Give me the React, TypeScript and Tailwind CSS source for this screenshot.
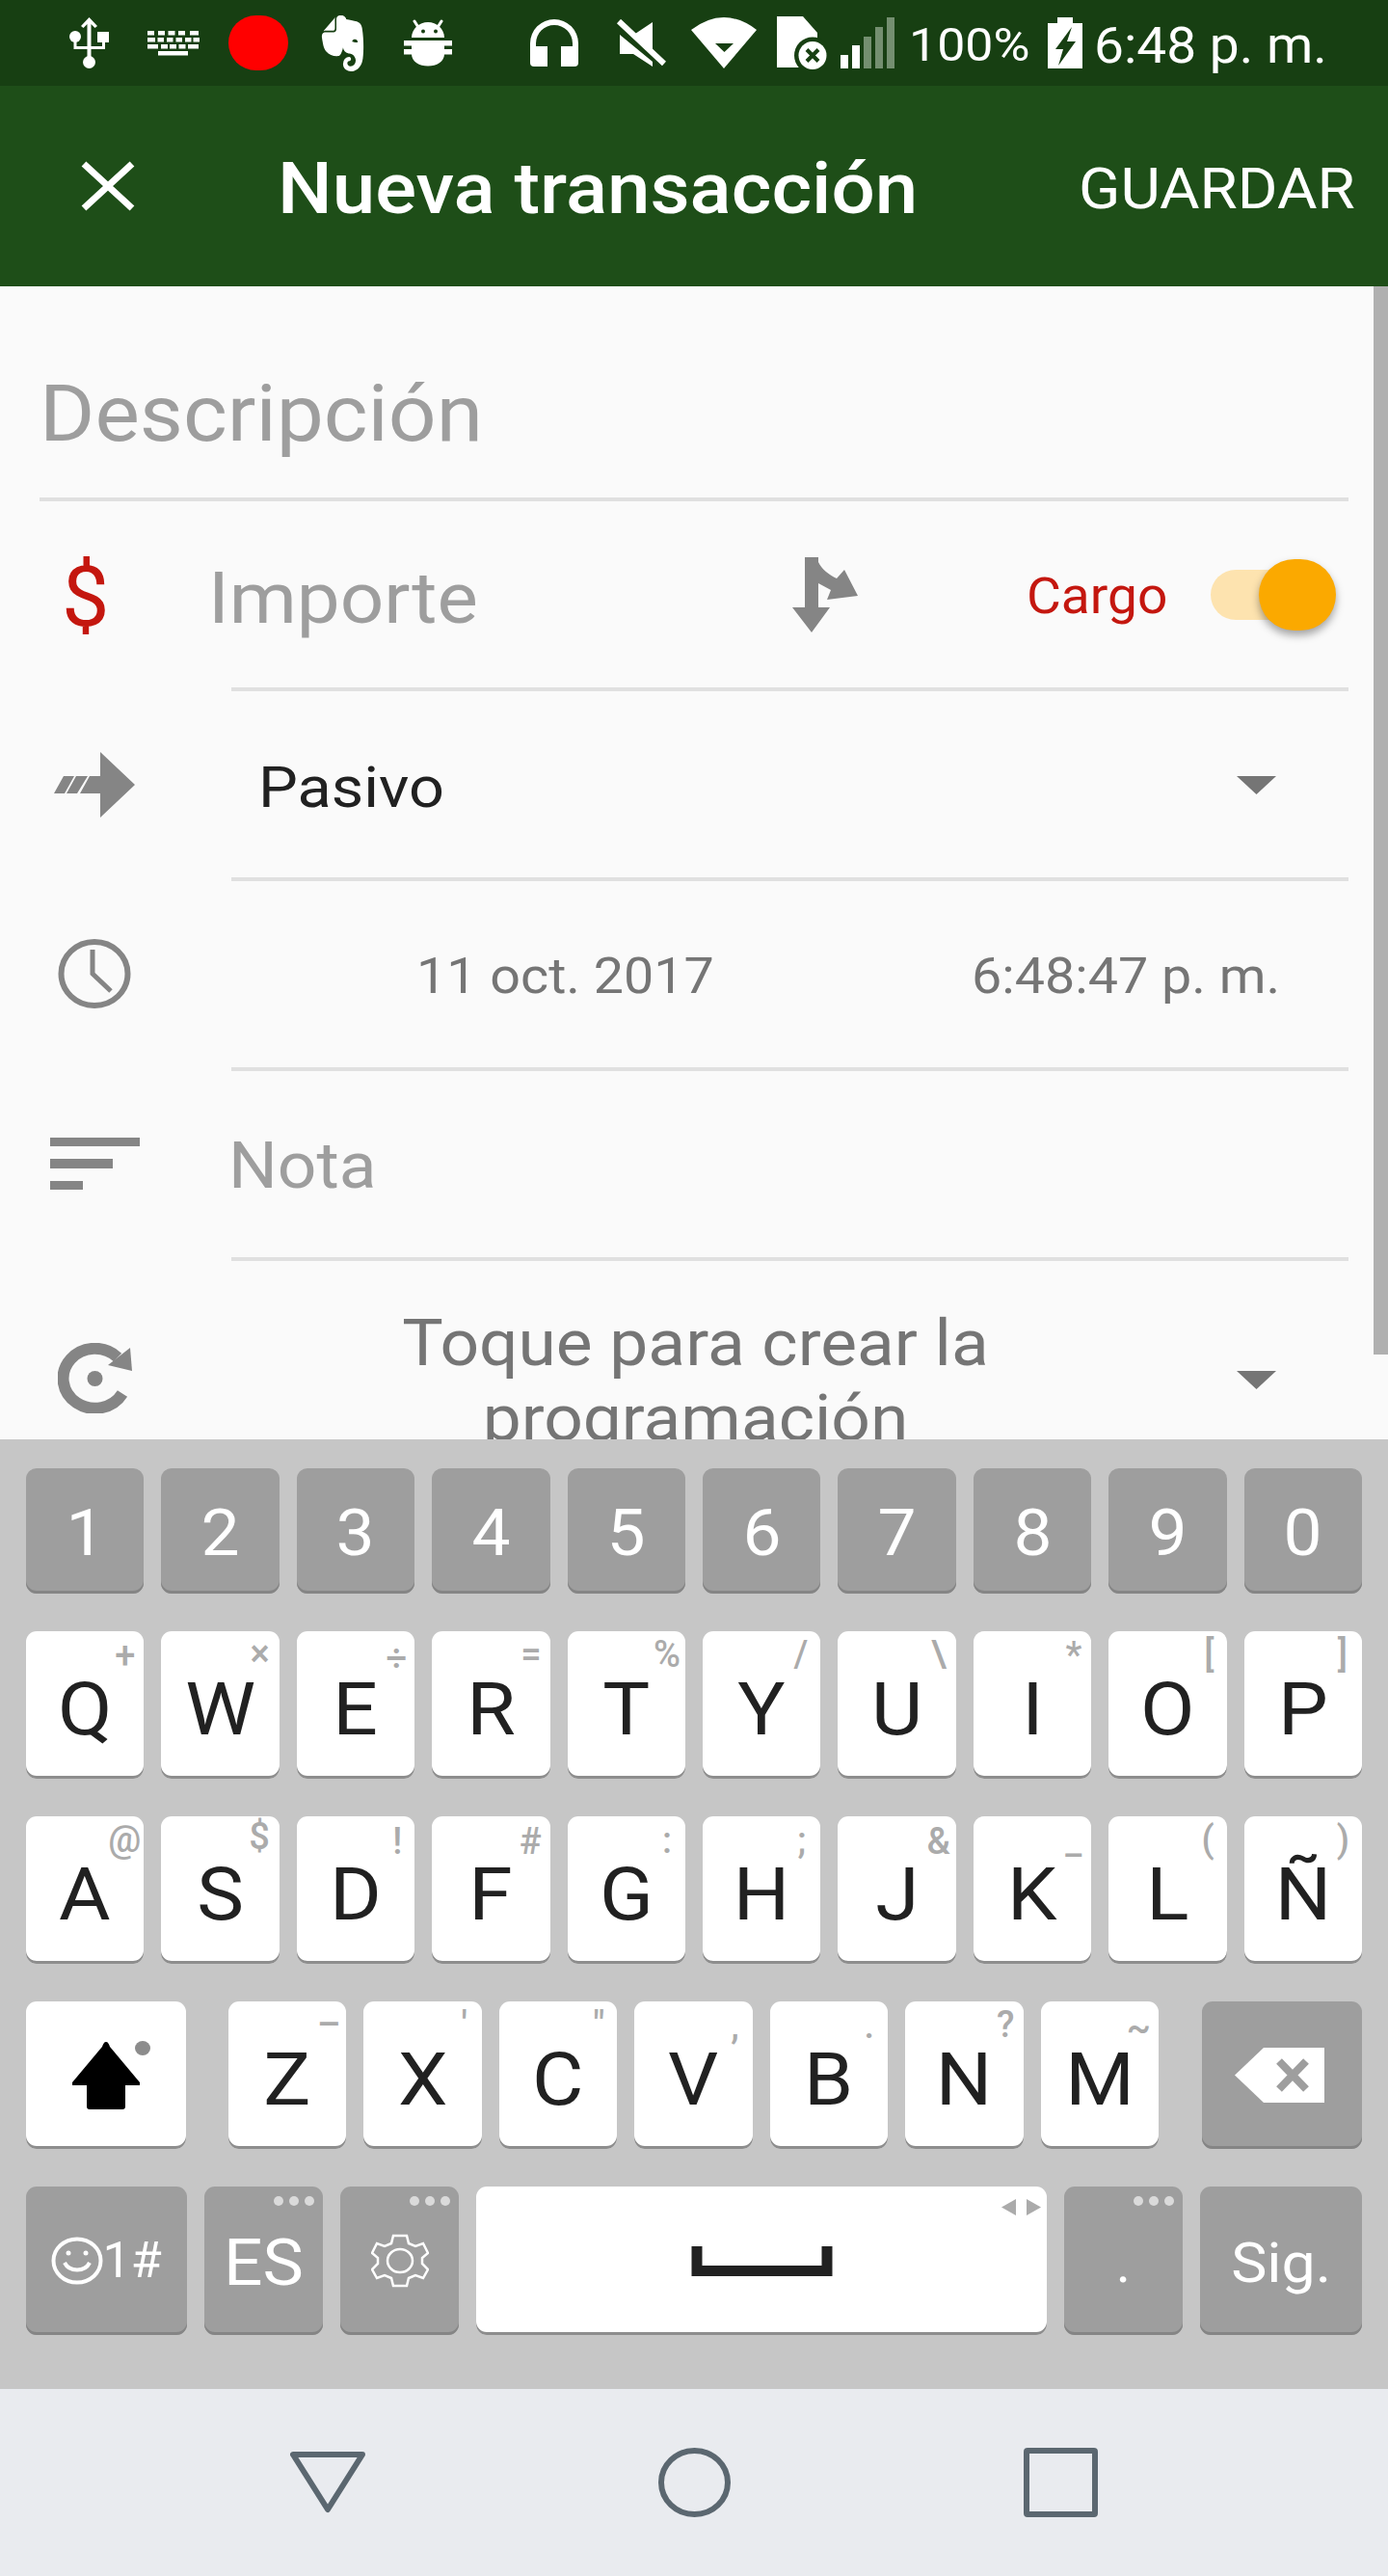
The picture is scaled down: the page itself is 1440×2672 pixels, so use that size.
import type { ReactNode } from "react";
import { SiEvernote } from "react-icons/si";

const numberKeys = ["1", "2", "3", "4", "5", "6", "7", "8", "9", "0"];

const qwertyKeys = [
  ["Q", "+", "right-[9px] top-[6px]"],
  ["W", "×", "right-[10px] top-[4px]"],
  ["E", "÷", "right-[8px] top-[9px]"],
  ["R", "=", "right-[9px] top-[5px]"],
  ["T", "%", "right-[5px] top-[5px]"],
  ["Y", "/", "right-[13px] top-[5px]"],
  ["U", "\\", "right-[10px] top-[5px]"],
  ["I", "*", "right-[10px] top-[6px]"],
  ["O", "[", "right-[13px] top-[5px]"],
  ["P", "]", "right-[15px] top-[5px]"],
];

const asdfKeys = [
  ["A", "@", "right-[3px] top-[5px]"],
  ["S", "$", "right-[10px] top-[2px]"],
  ["D", "!", "right-[13px] top-[7px]"],
  ["F", "#", "right-[9px] top-[7px]"],
  ["G", ":", "right-[14px] top-[6px]"],
  ["H", ";", "right-[15px] top-[6px]"],
  ["J", "&", "right-[6px] top-[7px]"],
  ["K", "_", "right-[10px] top-[6px]"],
  ["L", "(", "right-[13px] top-[5px]"],
  ["Ñ", ")", "right-[13px] top-[5px]"],
];

const zxcvKeys = [
  ["Z", "–", "right-[6px] top-[5px]"],
  ["X", "'", "right-[15px] top-[5px]"],
  ["C", '"', "right-[13px] top-[5px]"],
  ["V", ",", "right-[14px] top-[6px]"],
  ["B", ".", "right-[14px] top-[6px]"],
  ["N", "?", "right-[9px] top-[5px]"],
  ["M", "~", "right-[8px] top-[8px]"],
];

function Key({ dark, className, children }: { dark?: boolean; className?: string; children?: ReactNode }) {
  return (
    <div
      className={`relative flex items-center justify-center rounded-[11px] ${
        dark
          ? "bg-[#9E9E9E] text-white shadow-[inset_0_-3px_0_#858585]"
          : "bg-white text-[#212121] shadow-[inset_0_-3px_0_#8d8d8d]"
      } ${className ?? "flex-1"}`}
    >
      {children}
    </div>
  );
}

function LetterKey({ letter, sub, subPos }: { letter: string; sub: string; subPos: string }) {
  return (
    <Key>
      <span className="pt-[8px] text-[76px] leading-none scale-x-[1.08]">{letter}</span>
      <span className={`absolute text-[38px] font-medium leading-none text-[#ABABAB] ${subPos}`}>{sub}</span>
    </Key>
  );
}

function Dots() {
  return (
    <div className="absolute right-[9px] top-[10px] flex gap-[6px]">
      <span className="size-[10px] rounded-full bg-[#DADADA]" />
      <span className="size-[10px] rounded-full bg-[#DADADA]" />
      <span className="size-[10px] rounded-full bg-[#DADADA]" />
    </div>
  );
}

function Caret() {
  return (
    <svg viewBox="0 0 41 19" className="h-[19px] w-[41px] shrink-0">
      <polygon points="0,0 41,0 20.5,19" fill="#757575" />
    </svg>
  );
}

function StatusBar() {
  return (
    <div className="flex h-[89px] shrink-0 items-center bg-[#173F12] pl-[72px] text-white">
      {/* usb */}
      <svg viewBox="0 0 41 53" className="h-[53px] w-[41px]" fill="#fff">
        <path d="M20.5 0 L29 9 L26.5 11 L22.5 7 V47 H18.5 V7 L14.5 11 L12 9Z" />
        <circle cx="6" cy="20" r="6" />
        <rect x="29" y="15" width="12" height="11" />
        <path d="M4.5 20 H7.5 V30 H34 V25 H37 V33 H4.5Z" />
        <circle cx="20.5" cy="46.5" r="6.5" />
      </svg>
      {/* keyboard */}
      <svg viewBox="0 0 54 26" className="ml-[40px] h-[26px] w-[54px]" fill="#fff">
        {[0, 11, 21.5, 32, 44].map((x) => (
          <rect key={x} x={x} y="0" width={x === 44 ? 9 : 7} height="4.5" />
        ))}
        {[0, 10.5, 20, 29.5, 39, 47.5].map((x) => (
          <rect key={x} x={x} y="7" width={x === 0 ? 8 : 6.5} height="4.5" />
        ))}
        {[0, 14, 23, 32.5, 42].map((x) => (
          <rect key={x} x={x} y="14" width={x === 0 || x === 42 ? 11 : 7} height="4.5" />
        ))}
        <rect x="11" y="21" width="31" height="4.5" />
      </svg>
      <div className="ml-[30px] h-[57px] w-[62px] rounded-full bg-[#FF0000]" />
      <SiEvernote className="ml-[31px] h-[58px] w-[51px]" preserveAspectRatio="none" />
      {/* debug */}
      <svg viewBox="0 0 50 50" className="ml-[38px] h-[50px] w-[50px]" fill="#fff">
        <path d="M11 2 L16 10 M39 2 L34 10" stroke="#fff" strokeWidth="3" strokeLinecap="round" />
        <path d="M8 19 A17 16 0 0 1 42 19Z" />
        <circle cx="20" cy="12.5" r="2" fill="#173F12" />
        <circle cx="33" cy="12.5" r="2" fill="#173F12" />
        <rect x="0" y="22" width="50" height="5.5" />
        <rect x="8" y="27" width="34" height="5" />
        <rect x="0" y="31" width="50" height="5.5" />
        <path d="M8 36 H42 C42 44 34 48.5 25 48.5 C16 48.5 8 44 8 36Z" />
      </svg>
      {/* headset */}
      <svg viewBox="0 0 50 49" className="ml-[81px] h-[49px] w-[50px]" fill="#fff">
        <path d="M0 30 V25 A25 25 0 0 1 50 25 V30 H44 V25 A19 19 0 0 0 6 25 V30Z" />
        <path d="M0 28 H18 V49 H4 Q0 49 0 45Z" />
        <path d="M50 28 H32 V49 H46 Q50 49 50 45Z" />
      </svg>
      {/* muted */}
      <svg viewBox="0 0 52 50" className="ml-[39px] h-[50px] w-[52px]" fill="#fff">
        <path d="M20 15 L38 3 V32Z" />
        <path d="M4 16 L38 44 V49 L18 36 H4Z" />
        <path d="M3 2 L50 46" stroke="#fff" strokeWidth="6" />
      </svg>
      {/* wifi */}
      <svg viewBox="0 0 68 53" className="ml-[26px] h-[53px] w-[68px]" fill="#fff">
        <path d="M0 13 Q34 -13 68 13 L34 53Z" />
        <polygon points="25,27 44,27 34.5,36" fill="#173F12" />
      </svg>
      {/* sim */}
      <svg viewBox="0 0 52 55" className="ml-[21px] h-[55px] w-[52px]" fill="#fff">
        <path d="M0 0 H27 L42 17 V53 H0Z" />
        <circle cx="37" cy="40.5" r="19" fill="#173F12" />
        <circle cx="37" cy="40.5" r="14.5" />
        <path d="M31 34.5 L43 46.5 M43 34.5 L31 46.5" stroke="#173F12" strokeWidth="4" />
      </svg>
      {/* signal */}
      <svg viewBox="0 0 56 53" className="ml-[14px] h-[53px] w-[56px]">
        <rect x="0" y="39" width="8" height="14" fill="#fff" />
        <rect x="12" y="29" width="8" height="24" fill="#fff" />
        <rect x="24" y="20" width="8" height="33" fill="#748F70" />
        <rect x="36" y="10" width="8" height="43" fill="#748F70" />
        <rect x="48" y="0" width="8" height="53" fill="#748F70" />
      </svg>
      <span className="ml-[15px] w-[122px] origin-left scale-x-[1.08] whitespace-nowrap pt-[5px] text-[48px] leading-none">100%</span>
      {/* battery */}
      <svg viewBox="0 0 36 53" className="ml-[22px] h-[53px] w-[36px]" fill="#fff">
        <path d="M10 0 H26 V6 H36 V53 H0 V6 H10Z" />
        <polygon points="25,10 8,33 16,33 11,50 29,25 20,25" fill="#173F12" />
      </svg>
      <span className="ml-[12px] w-[238px] origin-left scale-x-[1.08] whitespace-nowrap pt-[5px] text-[51px] leading-none">6:48 p. m.</span>
    </div>
  );
}

function AppBar() {
  return (
    <div className="flex h-[208px] shrink-0 items-center bg-[#1E4E18] pl-[84px] text-white">
      <svg viewBox="0 0 56 52" className="h-[52px] w-[56px]">
        <path d="M3 3 L53 49 M53 3 L3 49" stroke="#fff" strokeWidth="7" />
      </svg>
      <span className="ml-[148px] w-[661px] origin-left scale-x-[1.08] whitespace-nowrap pt-[5px] text-[74px] font-medium leading-none">
        Nueva transacción
      </span>
      <span className="ml-[170px] w-[284px] origin-left scale-x-[1.08] whitespace-nowrap pt-[5px] text-[59px] leading-none">
        GUARDAR
      </span>
    </div>
  );
}

function FormRow({ icon, children, className }: { icon: ReactNode; children: ReactNode; className?: string }) {
  return (
    <div className="flex h-[197px] shrink-0 items-stretch pr-[41px]">
      <div className="flex w-[240px] shrink-0 items-center">{icon}</div>
      <div className={`flex flex-1 items-center border-b-[4px] border-[#E0E0E0] ${className ?? ""}`}>{children}</div>
    </div>
  );
}

function TransactionForm() {
  return (
    <div className="relative h-[1196px] shrink-0 overflow-hidden bg-[#FAFAFA]">
      <div className="absolute right-0 top-0 h-[1108px] w-[15px] bg-[#B0B0B0]" />

      <div className="mx-[41px] flex h-[223px] items-center border-b-[4px] border-[#E0E0E0] pt-[46px]">
        <span className="origin-left scale-x-[1.08] text-[81px] leading-none text-[#9E9E9E]">Descripción</span>
      </div>

      <FormRow icon={<span className="ml-[64px] text-[88px] leading-none text-[#C4170F]">$</span>}>
        <span className="-ml-[24px] w-[606px] origin-left scale-x-[1.08] pt-[8px] text-[74px] leading-none text-[#9E9E9E]">Importe</span>
        <svg viewBox="0 0 68 78" className="h-[78px] w-[68px]" fill="#858585">
          <path d="M13 0 H27 V5 C30 12 38 18 46 22 L54 13 L68 40 L36 44 L40 34 L27 27 V52 H39 L20 78 L0 52 H13Z" />
        </svg>
        <span className="ml-[175px] w-[145px] origin-left scale-x-[1.08] pt-[3px] text-[51px] leading-none text-[#C4170F]">Cargo</span>
        <div className="relative ml-[46px] flex h-[74px] w-[130px] items-center">
          <div className="h-[52px] w-[100px] rounded-full bg-[#FDE3AF]" />
          <div className="absolute right-0 top-0 h-[74px] w-[80px] rounded-full bg-[#FBA900] shadow-[0_5px_8px_rgba(0,0,0,0.35)]" />
        </div>
      </FormRow>

      <FormRow
        icon={
          <svg viewBox="0 0 85 68" className="mb-[3px] ml-[55px] h-[68px] w-[85px]" fill="#858585">
            <path d="M1 43 L11 25 H22 L12 43Z M14 43 L24 25 H36 L25 43Z M28 43 L38 25 H49 V0 L85 34 L49 68 V43Z" />
          </svg>
        }
      >
        <span className="ml-[28px] w-[175px] origin-left scale-x-[1.08] pt-[6px] text-[60px] leading-none text-[#212121]">Pasivo</span>
        <div className="ml-auto mr-[75px] mt-[2px]">
          <Caret />
        </div>
      </FormRow>

      <FormRow
        icon={
          <svg viewBox="0 0 76 72" className="mb-[5px] ml-[60px] h-[72px] w-[76px]" fill="none" stroke="#858585">
            <ellipse cx="38" cy="36" rx="34.5" ry="33" strokeWidth="6" />
            <path d="M36 11 V36 L55 54" strokeWidth="5" />
          </svg>
        }
      >
        <span className="ml-[192px] w-[283px] origin-left scale-x-[1.08] whitespace-nowrap pt-[4px] text-[51.5px] leading-none text-[#757575]">11 oct. 2017</span>
        <span className="ml-[293px] w-[294px] origin-left scale-x-[1.08] whitespace-nowrap pt-[4px] text-[51.5px] leading-none text-[#757575]">6:48:47 p. m.</span>
      </FormRow>

      <FormRow
        icon={
          <svg viewBox="0 0 93 54" className="mb-[5px] ml-[52px] h-[54px] w-[93px]" fill="#858585">
            <rect x="0" y="0" width="93" height="9" />
            <rect x="0" y="22" width="65" height="10" />
            <rect x="0" y="45" width="34" height="9" />
          </svg>
        }
      >
        <span className="-ml-[3px] origin-left scale-x-[1.08] pt-[5px] text-[66px] leading-none text-[#9E9E9E]">Nota</span>
      </FormRow>

      <div className="flex h-[248px] items-center pr-[116px]">
        <div className="flex w-[240px] shrink-0 items-center">
          <svg viewBox="0 0 78 73" className="mb-[6px] ml-[60px] h-[73px] w-[78px]" fill="#858585">
            <path d="M62 15 A33 31 0 1 0 67 52.5" fill="none" stroke="#858585" strokeWidth="12" />
            <polygon points="75,5 77,29 52,23" />
            <circle cx="38.5" cy="37" r="8" />
          </svg>
        </div>
        <div className="w-[963px] scale-x-[1.08] pt-[1px] text-center text-[66px] leading-[78px] text-[#757575]">
          Toque para crear la
          <br />
          programación
        </div>
        <div className="ml-auto mb-[2px]">
          <Caret />
        </div>
      </div>
    </div>
  );
}

function Keyboard() {
  return (
    <div className="flex h-[985px] shrink-0 flex-col gap-[39px] bg-[#C6C6C6] px-[27px] pt-[30px]">
      <div className="flex h-[130px] gap-[18px]">
        {numberKeys.map((n) => (
          <Key key={n} dark>
            <span className="pt-[6px] text-[66px] leading-none scale-x-[1.08]">{n}</span>
          </Key>
        ))}
      </div>
      <div className="flex h-[153px] gap-[18px]">
        {qwertyKeys.map(([letter, sub, pos]) => (
          <LetterKey key={letter} letter={letter} sub={sub} subPos={pos} />
        ))}
      </div>
      <div className="flex h-[153px] gap-[18px]">
        {asdfKeys.map(([letter, sub, pos]) => (
          <LetterKey key={letter} letter={letter} sub={sub} subPos={pos} />
        ))}
      </div>
      <div className="flex h-[153px] gap-[18px]">
        <Key className="mr-[26px] w-[166px] shrink-0">
          <svg viewBox="0 0 92 71" className="h-[71px] w-[92px]">
            <path d="M46 1 C48 1 49 3 50 6 L81 43 V46 H66 V68 Q66 71 63 71 H29 Q26 71 26 68 V46 H11 V43 L42 6 C43 3 44 1 46 1Z" fill="#000" />
            <ellipse cx="84" cy="7.5" rx="8" ry="7.5" fill="#8C8C8C" />
          </svg>
        </Key>
        {zxcvKeys.map(([letter, sub, pos]) => (
          <LetterKey key={letter} letter={letter} sub={sub} subPos={pos} />
        ))}
        <Key dark className="ml-[27px] w-[166px] shrink-0">
          <svg viewBox="0 0 93 57" className="mr-[4px] h-[57px] w-[93px]">
            <path d="M30 0 H93 V57 H30 L0 28.5Z" fill="#fff" />
            <path d="M46 14 L74 43 M74 14 L46 43" stroke="#9E9E9E" strokeWidth="8" />
          </svg>
        </Key>
      </div>
      <div className="flex h-[154px] gap-[18px]">
        <Key dark className="w-[167px] shrink-0">
          <svg viewBox="0 0 54 50" className="h-[50px] w-[54px]" fill="none" stroke="#fff" strokeWidth="4">
            <ellipse cx="27" cy="25" rx="24.5" ry="22.5" />
            <path d="M14 27 C19 37 35 37 40 27" />
            <circle cx="18" cy="17" r="2.5" fill="#fff" stroke="none" />
            <circle cx="36" cy="17" r="2.5" fill="#fff" stroke="none" />
          </svg>
          <span className="mr-[4px] w-[58px] whitespace-nowrap text-[52px] leading-none">1#</span>
        </Key>
        <Key dark className="w-[123px] shrink-0">
          <span className="pt-[6px] text-[66px] leading-none scale-x-[1.08]">ES</span>
          <Dots />
        </Key>
        <Key dark className="w-[123px] shrink-0">
          <svg viewBox="0 0 60 56" className="h-[56px] w-[60px]" fill="none" stroke="#fff" strokeWidth="2.5">
            <path d="M23 2 H37 L39 10 L46 13 L54 10 L59 20 L53 25 V31 L59 37 L54 46 L46 43 L39 46 L37 54 H23 L21 46 L14 43 L6 46 L1 37 L7 31 V25 L1 20 L6 10 L14 13 L21 10Z" />
            <ellipse cx="30" cy="28" rx="13" ry="12" />
          </svg>
          <Dots />
        </Key>
        <Key className="flex-1">
          <svg viewBox="0 0 147 31" className="h-[31px] w-[147px]" fill="none" stroke="#212121" strokeWidth="11">
            <path d="M6 0 V25.5 H141 V0" />
          </svg>
          <svg viewBox="0 0 41 17" className="absolute right-[6px] top-[13px] h-[17px] w-[41px]" fill="#ABABAB">
            <polygon points="0,8.5 15,0 15,17" />
            <polygon points="41,8.5 26,0 26,17" />
          </svg>
        </Key>
        <Key dark className="w-[123px] shrink-0">
          <span className="pt-[4px] text-[58px] leading-none">.</span>
          <Dots />
        </Key>
        <Key dark className="w-[168px] shrink-0">
          <span className="pt-[4px] text-[58px] leading-none scale-x-[1.08]">Sig.</span>
        </Key>
      </div>
    </div>
  );
}

function NavBar() {
  return (
    <div className="flex h-[194px] shrink-0 items-center justify-center gap-[304px] bg-[#E9EBEF]">
      <svg viewBox="0 0 78 64" className="h-[64px] w-[78px]" fill="none" stroke="#5B6770" strokeWidth="6">
        <polygon points="3,3 75,3 39,60" strokeLinejoin="round" />
      </svg>
      <svg viewBox="0 0 75 72" className="h-[72px] w-[75px]" fill="none" stroke="#5B6770" strokeWidth="6">
        <ellipse cx="37.5" cy="36" rx="34.5" ry="33" />
      </svg>
      <svg viewBox="0 0 77 72" className="h-[72px] w-[77px]" fill="none" stroke="#5B6770" strokeWidth="6">
        <rect x="3" y="3" width="71" height="66" rx="1" />
      </svg>
    </div>
  );
}

export default function App() {
  return (
    <div className="flex h-[2672px] w-[1440px] flex-col overflow-hidden font-['Roboto',sans-serif]">
      <StatusBar />
      <AppBar />
      <TransactionForm />
      <Keyboard />
      <NavBar />
    </div>
  );
}
